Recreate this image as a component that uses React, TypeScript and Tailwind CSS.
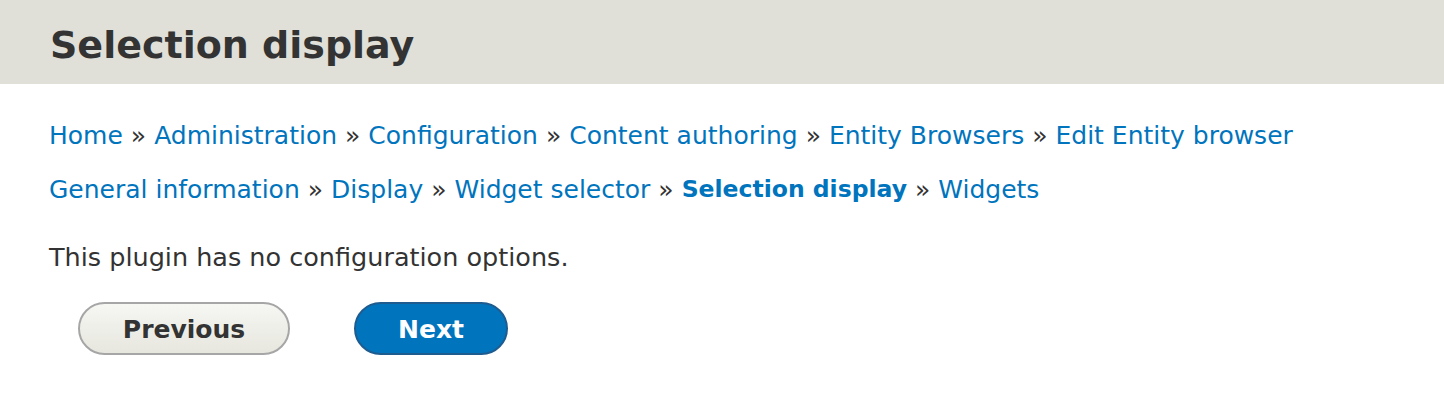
const crumbs1 = [
  "Home",
  "Administration",
  "Configuration",
  "Content authoring",
  "Entity Browsers",
  "Edit Entity browser",
];

const crumbs2 = [
  { label: "General information" },
  { label: "Display" },
  { label: "Widget selector" },
  { label: "Selection display", active: true },
  { label: "Widgets" },
];

const Sep = () => <span className="text-[#333] px-[8px]">»</span>;

export default function App() {
  return (
    <div
      className="w-[1444px] h-[412px] bg-white text-[#333]"
      style={{ fontFamily: '"DejaVu Sans", "Noto Sans", sans-serif' }}
    >
      <div className="h-[84px] bg-[#e0e0d8] flex items-center px-[50px]">
        <h1 className="text-[38px] font-bold leading-none text-[#333] pt-[6px]">
          Selection display
        </h1>
      </div>
      <div className="px-[49px] pt-[37px]">
        <div className="flex items-center h-[30px] text-[25px] text-[#0074bd]">
          {crumbs1.map((c, i) => (
            <span key={c} className="flex items-center">
              {i > 0 && <Sep />}
              <a>{c}</a>
            </span>
          ))}
        </div>
        <div className="flex items-center h-[30px] mt-[24px] text-[25px] text-[#0074bd]">
          {crumbs2.map((c, i) => (
            <span key={c.label} className="flex items-center">
              {i > 0 && <Sep />}
              <a className={c.active ? "font-bold text-[23.5px]" : ""}>{c.label}</a>
            </span>
          ))}
        </div>
        <p className="mt-[37px] text-[25.5px] leading-[30px]">
          This plugin has no configuration options.
        </p>
        <div className="flex gap-[64px] mt-[30px] ml-[29px]">
          <button className="w-[212px] h-[53px] pt-[3px] rounded-full border-2 border-[#a6a6a6] bg-gradient-to-b from-[#f6f6f3] to-[#e7e7df] text-[25px] font-bold text-[#333]">
            Previous
          </button>
          <button className="w-[154px] h-[53px] pt-[3px] rounded-full border-2 border-[#1e5c90] bg-[#0074bd] text-[25px] font-bold text-white">
            Next
          </button>
        </div>
      </div>
    </div>
  );
}
